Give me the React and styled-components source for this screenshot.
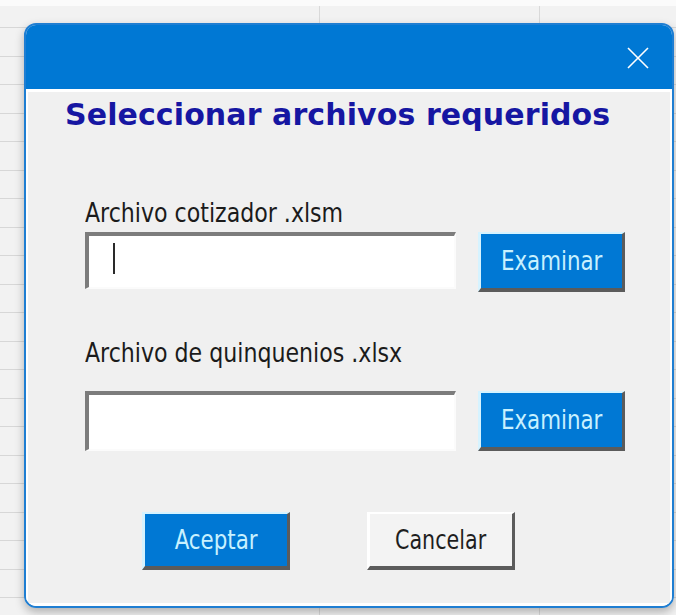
import React from 'react';
import styled, { createGlobalStyle } from 'styled-components';

const GlobalStyle = createGlobalStyle`
  html,
  body {
    margin: 0;
    padding: 0;
  }

  body {
    background: #f3f3f3;
    font-family: "DejaVu Sans", "Liberation Sans", sans-serif;
  }
`;

// worksheet behind the dialog: grid lines, a white strip on top
const Sheet = styled.div`
  width: 676px;
  height: 615px;
  box-sizing: border-box;
  padding: 23px 2px 0 24px;
  overflow: hidden;
  background:
    linear-gradient(#fbfbfb 0 6px, transparent 6px),
    linear-gradient(
      to right,
      transparent 319px,
      #d9d9d9 319px 320px,
      transparent 320px 539px,
      #d9d9d9 539px 540px,
      transparent 540px
    ),
    repeating-linear-gradient(
      to bottom,
      transparent 0 27.5px,
      #d7d7d7 27.5px 28.5px
    ),
    #f2f2f2;
`;

const Dialog = styled.div`
  width: 650px;
  height: 585px;
  box-sizing: border-box;
  display: flex;
  flex-direction: column;
  border: 2px solid #1f7ed2;
  border-radius: 12px;
  overflow: hidden;
  box-shadow: 0 4px 10px rgba(0, 0, 0, 0.28);
`;

const TitleBar = styled.div`
  height: 64px;
  flex: none;
  display: flex;
  align-items: center;
  justify-content: flex-end;
  padding: 2px 22px 0 0;
  box-sizing: border-box;
  background: #0078d4;
`;

const CloseButton = styled.button`
  display: flex;
  padding: 0;
  border: 0;
  background: none;
  cursor: pointer;
`;

const Client = styled.div`
  flex: 1;
  display: flex;
  flex-direction: column;
  padding-left: 57px;
  background: #f0f0f0;
  border-top: 3px solid #ffffff;
  border-left: 2px solid #ffffff;
  border-right: 2px solid #ffffff;
  border-bottom: 3px solid #ffffff;
`;

const Heading = styled.h1`
  margin: 5px 0 0 -20px;
  font-size: 30px;
  line-height: 36px;
  font-weight: bold;
  letter-spacing: 0.1px;
  color: #1616a2;
  white-space: nowrap;
`;

const Label = styled.div`
  margin-top: ${(p) => p.$gap}px;
  font-size: 27px;
  line-height: 32px;
  font-stretch: condensed;
  color: #1b1b1b;
  white-space: nowrap;
  transform: scaleX(0.91);
  transform-origin: left center;
`;

const Row = styled.div`
  margin-top: ${(p) => p.$gap}px;
  display: flex;
  align-items: flex-start;
  gap: 22px;
`;

const TextBox = styled.div`
  width: 371px;
  height: ${(p) => p.$h}px;
  box-sizing: border-box;
  display: flex;
  align-items: center;
  padding-left: 24px;
  background: #ffffff;
  border-top: 4px solid #7c7c7c;
  border-left: 4px solid #7c7c7c;
  border-right: 2px solid #fbfbfb;
  border-bottom: 2px solid #fbfbfb;
`;

const Caret = styled.span`
  width: 2px;
  height: 31px;
  margin-top: -6px;
  background: #2a2a2a;
`;

const Button = styled.button`
  width: ${(p) => p.$w}px;
  height: ${(p) => p.$h}px;
  box-sizing: border-box;
  display: flex;
  align-items: center;
  justify-content: center;
  padding: 0 0 2px;
  font-family: inherit;
  font-size: 27px;
  font-stretch: condensed;
  cursor: pointer;
  background: ${(p) => (p.$primary ? '#0078d4' : '#f3f3f3')};
  color: ${(p) => (p.$primary ? '#c8f1ff' : '#1e1e1e')};
  border-top: 2px solid ${(p) => (p.$primary ? '#d6f3ff' : '#ffffff')};
  border-left: 3px solid ${(p) => (p.$primary ? '#d6f3ff' : '#ffffff')};
  border-right: 3px solid #5b5b5b;
  border-bottom: 4px solid #5b5b5b;
  border-radius: 0;
`;

const Caption = styled.span`
  display: inline-block;
  white-space: nowrap;
  transform: scaleX(${(p) => p.$squeeze || 0.88});
`;

const Actions = styled.div`
  margin-top: 61px;
  padding-left: 57px;
  display: flex;
  gap: 77px;
`;

const CloseIcon = () => (
  <svg width="24" height="24" viewBox="0 0 24 24" fill="none">
    <path d="M2 2 L22 22 M22 2 L2 22" stroke="#ffffff" strokeWidth="1.6" />
  </svg>
);

const App = () => {
  return (
    <Sheet>
      <GlobalStyle />
      <Dialog>
        <TitleBar>
          <CloseButton aria-label="Cerrar">
            <CloseIcon />
          </CloseButton>
        </TitleBar>
        <Client>
          <Heading>Seleccionar archivos requeridos</Heading>

          <Label $gap={64}>Archivo cotizador .xlsm</Label>
          <Row $gap={3}>
            <TextBox $h={57}>
              <Caret />
            </TextBox>
            <Button $primary $w={147} $h={60}>
              <Caption>Examinar</Caption>
            </Button>
          </Row>

          <Label $gap={45}>Archivo de quinquenios .xlsx</Label>
          <Row $gap={22}>
            <TextBox $h={60} />
            <Button $primary $w={147} $h={60}>
              <Caption>Examinar</Caption>
            </Button>
          </Row>

          <Actions>
            <Button $primary $w={148} $h={58}>
              <Caption>Aceptar</Caption>
            </Button>
            <Button $w={148} $h={58}>
              <Caption $squeeze={0.85}>Cancelar</Caption>
            </Button>
          </Actions>
        </Client>
      </Dialog>
    </Sheet>
  );
};

export default App;
